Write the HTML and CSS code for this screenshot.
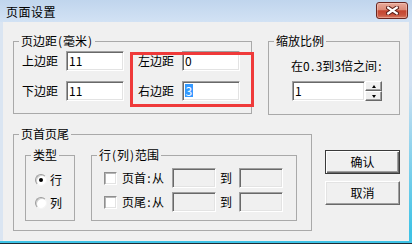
FILE: index.html
```html
<!DOCTYPE html>
<html lang="zh-CN">
<head>
<meta charset="utf-8">
<title>页面设置</title>
<link rel="stylesheet" href="styles.css">
</head>
<body>
<div class="window">
  <div class="titlebar">
    <span class="title">页面设置</span>
    <span class="close" aria-label="关闭">
      <svg width="13" height="9" viewBox="0 0 13 9"><path d="M2.2 1.6 L10.8 7.4 M10.8 1.6 L2.2 7.4" stroke="#5b1c16" stroke-width="4.2" stroke-linecap="square"/><path d="M2.2 1.6 L10.8 7.4 M10.8 1.6 L2.2 7.4" stroke="#ffffff" stroke-width="2.2" stroke-linecap="square"/></svg>
    </span>
  </div>
  <div class="client">
    <div class="row-top">
      <fieldset class="group g-margin">
        <legend>页边距<span class="hw">(</span>毫米<span class="hw">)</span></legend>
        <div class="mgrid">
          <span class="lbl">上边距</span><div class="edit">11</div>
          <span class="lbl">左边距</span><div class="edit">0</div>
          <span class="lbl">下边距</span><div class="edit">11</div>
          <span class="lbl">右边距</span><div class="edit"><span class="sel">3</span></div>
        </div>
      </fieldset>
      <fieldset class="group g-zoom">
        <legend>缩放比例</legend>
        <div class="zbody">
          <div class="hint">在0<span class="hw">.</span>3到3倍之间<span class="hw">:</span></div>
          <div class="spin-row">
            <div class="edit spin-edit">1</div>
            <div class="spin">
              <span class="sbtn"><span class="arrow up"></span></span>
              <span class="sbtn"><span class="arrow down"></span></span>
            </div>
          </div>
        </div>
      </fieldset>
    </div>
    <div class="row-bottom">
      <fieldset class="group g-header">
        <legend>页首页尾</legend>
        <div class="hbody">
          <fieldset class="group g-type">
            <legend>类型</legend>
            <div class="tbody">
              <div class="radio-row"><span class="radio checked"></span><span>行</span></div>
              <div class="radio-row"><span class="radio"></span><span>列</span></div>
            </div>
          </fieldset>
          <fieldset class="group g-range">
            <legend>行<span class="hw">(</span>列<span class="hw">)</span>范围</legend>
            <div class="rbody">
              <div class="range-row">
                <span class="chk"></span>
                <span class="rlabel">页首<span class="hw">:</span>从</span>
                <div class="edit disabled"></div>
                <span class="to">到</span>
                <div class="edit disabled"></div>
              </div>
              <div class="range-row">
                <span class="chk"></span>
                <span class="rlabel">页尾<span class="hw">:</span>从</span>
                <div class="edit disabled"></div>
                <span class="to">到</span>
                <div class="edit disabled"></div>
              </div>
            </div>
          </fieldset>
        </div>
      </fieldset>
      <div class="buttons">
        <button class="btn default">确认</button>
        <button class="btn">取消</button>
      </div>
    </div>
  </div>
  <div class="highlight"></div>
</div>
</body>
</html>
```
FILE: styles.css
```css
* { box-sizing: border-box; }
html, body { margin: 0; padding: 0; }
body {
  font-family: "Noto Sans CJK SC", sans-serif;
  font-size: 12px;
  line-height: 14px;
  color: #000;
  background: #f0f0f0;
}
.window {
  position: relative;
  width: 412px;
  height: 244px;
  display: flex;
  flex-direction: column;
  background: linear-gradient(to bottom, #d3e2f3 0%, #cfe0f2 35%, #3fc3e6 95%);
  border-bottom: 1px solid #1e2b33;
}
.titlebar {
  height: 22px;
  flex: none;
  display: flex;
  align-items: center;
  justify-content: space-between;
  padding: 0 4px 0 6px;
  background: linear-gradient(#c0d5ed, #d2e2f4);
}
.title { letter-spacing: 0.5px; padding-top: 1px; }
.close {
  align-self: flex-start;
  margin-top: 2px;
  width: 32px;
  height: 17px;
  display: flex;
  align-items: center;
  justify-content: center;
  border: 1px solid #6a2620;
  border-radius: 3px;
  background: linear-gradient(#e8aa9b 0%, #dc8b78 45%, #c4442f 52%, #c9553f 80%, #d77b64 100%);
  box-shadow: inset 0 0 0 1px rgba(255,220,210,0.4);
}
.client {
  flex: 1;
  margin: 0 3px 2px 0;
  border-left: 3px solid #dae5f2;
  background: #f0f0f0;
  padding: 12px 0 0 10px;
}
.row-top { display: flex; align-items: flex-start; }
.row-bottom { display: flex; align-items: flex-start; margin-top: 12px; }

.group {
  margin: 0;
  padding: 0;
  min-width: 0;
  border: 1px solid #a9a9a9;
}
.group > legend {
  margin-left: 5px;
  padding: 0 2px;
  height: 14px;
  line-height: 14px;
  white-space: nowrap;
}
.g-margin { width: 239px; height: 80px; }
.g-zoom { width: 132px; height: 81px; margin-left: 16px; }
.g-header { width: 299px; height: 104px; }
.g-type { width: 50px; height: 73px; }
.g-range { width: 206px; height: 73px; }

.hw { display: inline-block; width: 6px; text-align: center; }

.mgrid {
  display: grid;
  grid-template-columns: 44px 72px 44px 58px;
  grid-auto-rows: 20px;
  row-gap: 10px;
  align-items: center;
  padding: 3px 0 0 8px;
}
.lbl { white-space: nowrap; }

.edit {
  width: 58px;
  height: 20px;
  background: #fff;
  border: 1px solid;
  border-color: #a0a0a0 #ffffff #ffffff #a0a0a0;
  box-shadow: inset 1px 1px 0 #696969, inset -1px -1px 0 #e3e3e3;
  padding: 0 0 0 2px;
  line-height: 18px;
  font-size: 12px;
}
.edit.disabled { width: 44px; background: #f0f0f0; }
.sel { display: inline-block; background: #3399ff; color: #fff; line-height: 13px; padding: 0 0.5px; }

.zbody { padding: 11px 0 0 22px; }
.hint { white-space: nowrap; }
.spin-row { display: flex; margin: 8px 0 0 1px; }
.spin-edit { width: 73px; }
.spin { display: flex; flex-direction: column; }
.sbtn {
  width: 17px;
  height: 10px;
  display: flex;
  align-items: center;
  justify-content: center;
  background: #f0f0f0;
  border: 1px solid;
  border-color: #ffffff #696969 #696969 #ffffff;
  box-shadow: inset -1px -1px 0 #a0a0a0;
}
.arrow { width: 0; height: 0; border-left: 2.5px solid transparent; border-right: 2.5px solid transparent; }
.arrow.up { border-bottom: 3px solid #000; }
.arrow.down { border-top: 3px solid #000; }

.hbody { display: flex; gap: 16px; padding: 7px 0 0 11px; }
.tbody { padding: 11px 0 0 9px; display: flex; flex-direction: column; gap: 9px; }
.radio-row { display: flex; align-items: center; gap: 3px; height: 14px; }
.radio {
  position: relative;
  width: 12px;
  height: 12px;
  border-radius: 50%;
  background: #fff;
  border: 1px solid;
  border-color: #9c9c9c #f4f4f4 #f4f4f4 #9c9c9c;
  box-shadow: inset 1px 1px 0 #cfcfcf;
}
.radio.checked::after {
  content: "";
  position: absolute;
  left: 3px;
  top: 3px;
  width: 4px;
  height: 4px;
  border-radius: 50%;
  background: #000;
}
.rbody { padding: 6px 0 0 12px; display: flex; flex-direction: column; gap: 4px; }
.range-row { display: flex; align-items: center; height: 20px; }
.chk {
  width: 13px;
  height: 13px;
  background: #fff;
  border: 1px solid;
  border-color: #8f8f8f #ffffff #ffffff #8f8f8f;
  box-shadow: inset 1px 1px 0 #b5b5b5, inset -1px -1px 0 #e3e3e3;
  margin-right: 5px;
}
.rlabel { width: 50px; white-space: nowrap; }
.to { margin: 0 7px 0 4px; }

.buttons { display: flex; flex-direction: column; gap: 7px; margin: 23px 0 0 13px; }
.btn {
  width: 75px;
  height: 24px;
  padding: 0;
  font: inherit;
  color: #000;
  background: #f0f0f0;
  border: 1px solid;
  border-color: #ffffff #696969 #696969 #ffffff;
  box-shadow: inset -1px -1px 0 #a0a0a0, inset 1px 1px 0 #e3e3e3;
}
.btn.default {
  border-color: #3a3a3a;
  box-shadow: inset 1px 1px 0 #ffffff, inset -1px -1px 0 #696969, inset -2px -2px 0 #a0a0a0;
}

.highlight {
  position: absolute;
  left: 130px;
  top: 52px;
  width: 124px;
  height: 55px;
  border: 3px solid #ef3a3a;
  pointer-events: none;
}
```
